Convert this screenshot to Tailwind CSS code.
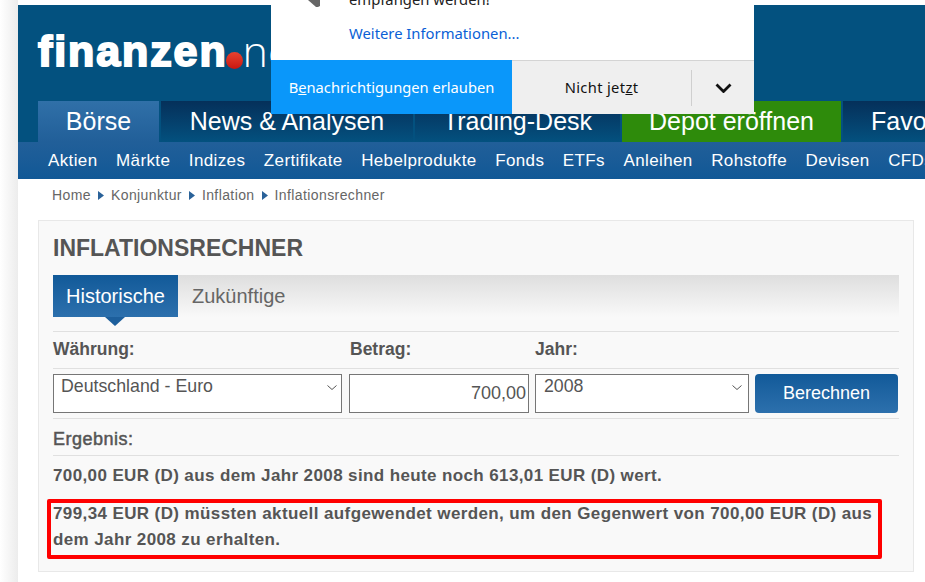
<!DOCTYPE html>
<html lang="de">
<head>
  <meta charset="UTF-8" />
  <meta name="viewport" content="width=device-width, initial-scale=1.0" />
  <title>Inflationsrechner</title>
  <script src="https://cdn.jsdelivr.net/npm/@tailwindcss/browser@4"></script>
</head>
<body class="bg-white font-['Liberation_Sans',Arial,sans-serif] text-[#555]">
  <div class="relative flex w-[925px] h-[582px] overflow-hidden">
    <!-- page shadow left of the content -->
    <div class="w-[18px] shrink-0 bg-gradient-to-r from-white to-[#ececec]"></div>

    <div class="w-[907px] shrink-0 pt-[5px]">
      <!-- header -->
      <header class="h-[137px] bg-[#03517f] flex flex-col overflow-hidden">
        <div class="h-[96px] pl-[20px] pt-[21px] flex items-start text-white">
          <span class="text-[43px] leading-[50px] font-bold tracking-[1.9px] [-webkit-text-stroke:2px_white]">finanzen</span>
          <span class="w-[17px] h-[17px] mt-[26px] -ml-[2px] rounded-full bg-gradient-to-b from-[#e8412f] to-[#c8140f]"></span>
          <span class="text-[43px] leading-[50px] font-['Open_Sans',sans-serif] font-light">net</span>
        </div>
        <nav class="h-[41px] pl-[20px] flex gap-[2px] text-[25px] leading-[41px] text-white whitespace-nowrap">
          <a class="w-[121px] shrink-0 text-center bg-gradient-to-b from-[#3070a8] to-[#215f99]">Börse</a>
          <a class="w-[252px] shrink-0 text-center bg-gradient-to-b from-[#05305a] to-[#03517f]">News &amp; Analysen</a>
          <a class="w-[205px] shrink-0 text-center bg-gradient-to-b from-[#05305a] to-[#03517f]">Trading-Desk</a>
          <a class="w-[219px] shrink-0 text-center bg-[#2e8b0b]">Depot eröffnen</a>
          <a class="w-[120px] shrink-0 pl-[28px] bg-gradient-to-b from-[#05305a] to-[#03517f]">Favoriten</a>
        </nav>
      </header>

      <!-- sub navigation -->
      <div class="h-[37px] pl-[30px] flex gap-[18.5px] items-center bg-gradient-to-b from-[#215f99] to-[#105896] text-white text-[17px] tracking-[0.38px] whitespace-nowrap overflow-hidden">
        <a>Aktien</a><a>Märkte</a><a>Indizes</a><a>Zertifikate</a><a>Hebelprodukte</a><a>Fonds</a><a>ETFs</a><a>Anleihen</a><a>Rohstoffe</a><a>Devisen</a><a>CFDs</a>
      </div>

      <!-- breadcrumb -->
      <div class="h-[41px] pl-[34px] pb-[9px] flex items-center gap-[7px] text-[14px] tracking-[0.4px] text-[#666]">
        <span>Home</span>
        <svg class="w-[6px] h-[9px] fill-[#2a6299]" viewBox="0 0 6 9"><path d="M0 0l6 4.5L0 9z"/></svg>
        <span>Konjunktur</span>
        <svg class="w-[6px] h-[9px] fill-[#2a6299]" viewBox="0 0 6 9"><path d="M0 0l6 4.5L0 9z"/></svg>
        <span>Inflation</span>
        <svg class="w-[6px] h-[9px] fill-[#2a6299]" viewBox="0 0 6 9"><path d="M0 0l6 4.5L0 9z"/></svg>
        <span>Inflationsrechner</span>
      </div>

      <!-- calculator panel -->
      <section class="ml-[20px] w-[876px] h-[352px] border border-[#e8e8e8] bg-[#f9f9f9] pl-[14px] pr-[14px]">
        <h1 class="h-[54px] pt-[12px] text-[23px] leading-[30px] font-bold">INFLATIONSRECHNER</h1>

        <div class="h-[42px] flex bg-gradient-to-b from-[#dedede] to-[#f9f9f9]">
          <div class="relative w-[125px] text-center text-[20px] leading-[42px] text-white bg-gradient-to-b from-[#115a99] to-[#2c70ad]">
            Historische
            <svg class="absolute left-[52px] top-[42px] w-[20px] h-[9px] fill-[#1d5f9c]" viewBox="0 0 20 9"><path d="M0 0h20l-10 9z"/></svg>
          </div>
          <div class="pl-[14px] text-[20px] leading-[42px] text-[#666]">Zukünftige</div>
        </div>

        <div class="mt-[14px] h-[38px] border-t border-b border-[#e0e0e0] flex items-center text-[17.5px] font-bold pb-[1px]">
          <span class="w-[297px]">Währung:</span>
          <span class="w-[185px]">Betrag:</span>
          <span>Jahr:</span>
        </div>

        <div class="h-[50px] pt-[5px] border-b border-[#e0e0e0] flex">
          <div class="relative w-[289px] h-[39px] border border-[#767676] bg-white pl-[7px] text-[17.75px] leading-[22px]">
            Deutschland - Euro
            <svg class="absolute right-[4px] top-[10px] w-[10px] h-[5px] stroke-[#555] fill-none" viewBox="0 0 10 5"><path d="M0.5 0.5l4.5 4 4.5-4"/></svg>
          </div>
          <div class="ml-[7px] w-[180px] h-[39px] border border-[#767676] bg-white pr-[2px] text-right text-[18px] leading-[37px]">700,00</div>
          <div class="relative ml-[6px] w-[214px] h-[39px] border border-[#767676] bg-white pl-[8px] text-[17.75px] leading-[22px]">
            2008
            <svg class="absolute right-[6px] top-[10px] w-[10px] h-[5px] stroke-[#555] fill-none" viewBox="0 0 10 5"><path d="M0.5 0.5l4.5 4 4.5-4"/></svg>
          </div>
          <button class="ml-[6px] w-[143px] h-[39px] rounded-[4px] text-[18px] text-white bg-gradient-to-b from-[#115a99] to-[#2c70ad]">Berechnen</button>
        </div>

        <div class="h-[37px] pt-[8px] border-b border-[#e0e0e0] text-[18px] tracking-[0.5px] leading-[24px] [-webkit-text-stroke:0.5px_#555]">Ergebnis:</div>
        <p class="pt-[8px] text-[17px] tracking-[0.38px] leading-[24px] font-bold">700,00 EUR (D) aus dem Jahr 2008 sind heute noch 613,01 EUR (D) wert.</p>
        <p class="pt-[13px] text-[17px] tracking-[0.39px] leading-[26px] font-bold">799,34 EUR (D) müssten aktuell aufgewendet werden, um den Gegenwert von 700,00 EUR (D) aus dem Jahr 2008 zu erhalten.</p>
      </section>
    </div>

    <!-- red annotation frame -->
    <div class="absolute left-[47px] top-[499px] w-[835px] h-[60px] border-[4px] border-[#ff0000] rounded-[2px]"></div>

    <!-- browser notification prompt -->
    <div class="absolute left-[271px] top-0 w-[483px] h-[114px] bg-white flex flex-col">
      <div class="h-[60px] relative font-['Noto_Sans',sans-serif] text-[14.8px]">
        <svg class="absolute left-[37px] top-0 w-[12px] h-[7px] fill-[#666]" viewBox="0 0 12 7"><path d="M0 0h12v6l-2 1H8z"/></svg>
        <p class="absolute left-[78px] top-[-10px] leading-[18px] text-[#222]">empfangen werden!</p>
        <p class="absolute left-[78px] top-[24px] leading-[18px] text-[#0a5fd6]">Weitere Informationen...</p>
      </div>
      <div class="h-[54px] flex font-['Noto_Sans',sans-serif] text-[14.7px]">
        <button class="w-[241px] pt-[1px] bg-[#0a97fa] text-white"><span>B<u>e</u>nachrichtigungen erlauben</span></button>
        <div class="flex-1 flex items-center bg-[#efefef] border-t border-[#d4d4d4] text-[#111]">
          <span class="w-[179px] text-center tracking-[0.35px]">Nicht jet<u>z</u>t</span>
          <span class="w-px h-[36px] bg-[#cfcfcf]"></span>
          <span class="flex-1 flex justify-center">
            <svg class="w-[17px] h-[10px] stroke-[#111] fill-none" stroke-width="2.8" viewBox="0 0 17 10"><path d="M1.5 1.5l7 7 7-7"/></svg>
          </span>
        </div>
      </div>
    </div>
  </div>
</body>
</html>
